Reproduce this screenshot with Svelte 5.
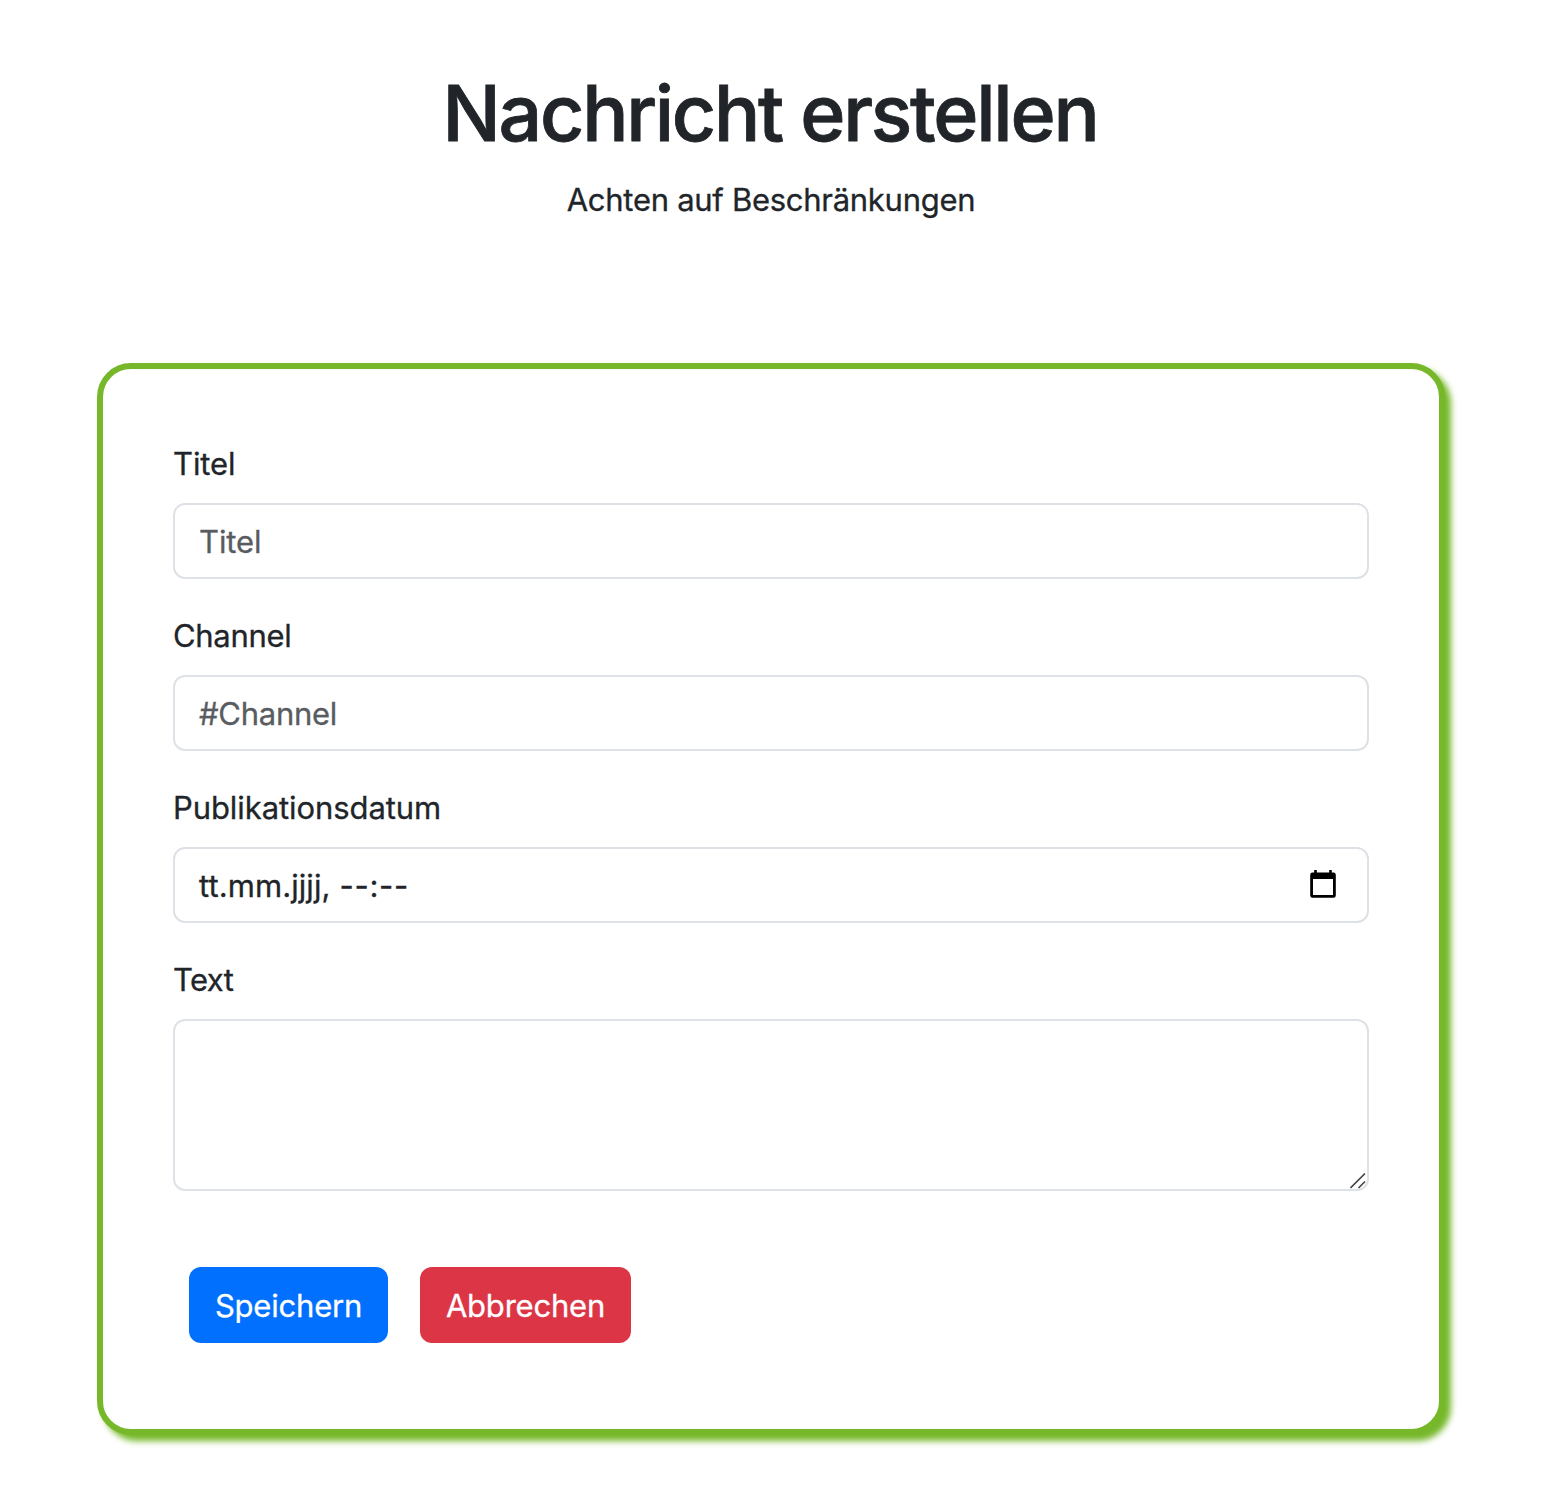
<script>
  let title = $state('');
  let channel = $state('');
  let text = $state('');
</script>

<main class="page">
  <header class="intro">
    <h1>Nachricht erstellen</h1>
    <p class="hint">Achten auf Beschränkungen</p>
  </header>

  <form class="card">
    <div class="field">
      <label for="title">Titel</label>
      <input id="title" class="control" placeholder="Titel" bind:value={title} />
    </div>
    <div class="field">
      <label for="channel" class="channel-label">Channel</label>
      <input id="channel" class="control channel" placeholder="#Channel" bind:value={channel} />
    </div>
    <div class="field">
      <label for="date">Publikationsdatum</label>
      <div id="date" class="control date">
        <span class="day">tt.mm.jjjj,</span><span class="time">--:--</span>
        <svg class="calendar" width="26" height="28" viewBox="0 0 26 28" aria-hidden="true">
          <path fill-rule="evenodd" d="M4.200 0h2.600v2.600h12.400V0h2.600v2.600h1.700a2.300 2.300 0 0 1 2.300 2.300v20.500a2.300 2.300 0 0 1-2.300 2.300h-21A2.300 2.300 0 0 1 .2 25.400v-20.500A2.300 2.300 0 0 1 2.500 2.600H4.200zM3 9v16h20V9z" />
        </svg>
      </div>
    </div>
    <div class="field">
      <label for="text" class="text-label">Text</label>
      <div class="area">
        <textarea id="text" class="control" bind:value={text}></textarea>
        <svg class="grip" width="16" height="16" viewBox="0 0 16 16" aria-hidden="true">
          <path d="M.5 15L15 .5M8.500 15L15 8.500" />
        </svg>
      </div>
    </div>
    <div class="actions">
      <button type="button" class="save">Speichern</button>
      <button type="button" class="cancel">Abbrechen</button>
    </div>
  </form>
</main>

<style>
  :global(body) { background: #fff; }
  .page {
    box-sizing: border-box;
    width: 1542px;
    padding: 65px 97px 75px;
    font: 400 31px/48px Inter, 'Liberation Sans', sans-serif;
    letter-spacing: -0.08px;
    -webkit-text-stroke: 0.3px;
    color: #212529;
  }
  .intro { height: 298px; text-align: center; }
  h1 { margin: 0 0 15px; padding-right: 2px; font-size: 77px; line-height: 96px; font-weight: 500; letter-spacing: -2.26px; -webkit-text-stroke: 0.8px; }
  .hint { margin: 0; letter-spacing: -0.28px; }
  .card {
    box-sizing: border-box;
    height: 1072px;
    padding: 70px;
    border: 6px solid #76b82a;
    border-radius: 34px;
    background: #fff;
    box-shadow: 6px 6px 6px #76b82a;
  }
  .field { margin-bottom: 32px; }
  label { display: block; box-sizing: border-box; height: 64px; padding-top: 1px; }
  .channel-label { letter-spacing: -0.32px; }
  .text-label { letter-spacing: -0.6px; }
  .control {
    box-sizing: border-box;
    display: block;
    width: 100%;
    height: 76px;
    margin: 0;
    padding: 12px 24px;
    border: 2px solid #dee2e6;
    border-radius: 12px;
    background: #fff;
    color: inherit;
    font: inherit;
    letter-spacing: inherit;
    outline: 0;
  }
  .control::placeholder { color: #595c5f; opacity: 1; }
  .channel { letter-spacing: -0.28px; }
  .date { display: flex; align-items: center; padding: 14px 24px 12px; letter-spacing: 0.08px; }
  .time { margin-left: 9px; letter-spacing: 0.7px; }
  .calendar { margin: -4px 7px 0 auto; }
  .area { position: relative; }
  textarea.control { height: 172px; resize: none; }
  .grip { position: absolute; right: 3px; bottom: 2px; fill: none; stroke: #444; stroke-width: 1.600; }
  .actions { display: flex; gap: 32px; padding: 44px 16px 16px; }
  button {
    height: 76px;
    padding: 2px 0 0;
    border: 0;
    border-radius: 12px;
    color: #fff;
    font: inherit;
    letter-spacing: -0.2px;
  }
  .save { width: 199px; background: #0170fe; }
  .cancel { width: 211px; background: #dc3545; }
</style>
